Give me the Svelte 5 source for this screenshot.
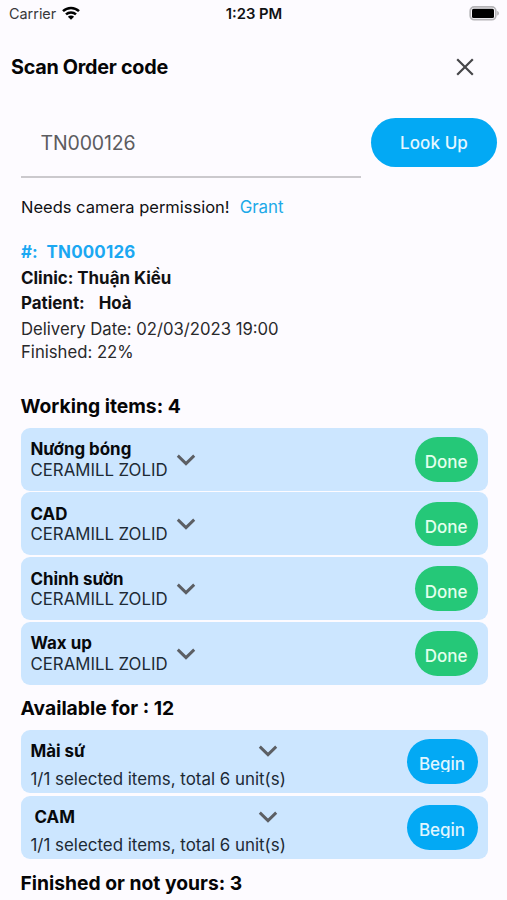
<script lang="ts">
  type WorkingItem = { stage: string; material: string };
  type AvailableItem = { stage: string; summary: string; indented?: boolean };

  let code = $state("TN000126");

  const working: WorkingItem[] = [
    { stage: "Nướng bóng", material: "CERAMILL ZOLID" },
    { stage: "CAD", material: "CERAMILL ZOLID" },
    { stage: "Chỉnh sườn", material: "CERAMILL ZOLID" },
    { stage: "Wax up", material: "CERAMILL ZOLID" },
  ];

  const available: AvailableItem[] = [
    { stage: "Mài sứ", summary: "1/1 selected items, total 6 unit(s)" },
    { stage: "CAM", summary: "1/1 selected items, total 6 unit(s)", indented: true },
  ];
</script>

{#snippet chevron()}
  <svg class="chevron" viewBox="0 0 20 12" fill="none" stroke="currentColor" stroke-width="2.9"><path d="M1.800 1.600 10 9.600l8.200-8"/></svg>
{/snippet}

<div class="screen">
  <div class="status-bar">
    <div class="carrier">
      <span class="carrier-name">Carrier</span>
      <svg class="wifi" viewBox="0 0 18 14" fill="none" stroke="#000" stroke-width="2.500"><path d="M1 5.100a11.600 11.600 0 0 1 16 0"/><path d="M4 8.400a7.300 7.300 0 0 1 10 0"/><path d="M9 13.800 5.900 10.700a4.400 4.400 0 0 1 6.200 0Z" fill="#000" stroke="none"/></svg>
    </div>
    <span class="clock">1:23 PM</span>
    <div class="battery-slot">
      <svg class="battery" viewBox="0 0 31 15"><rect x="1.200" y="0.900" width="25.600" height="12.800" rx="4" fill="#fdfbff" stroke="#b5b4b7" stroke-width="1.700"/><rect x="3" y="2.700" width="22" height="9.200" rx="1.500" fill="#000"/><path d="M28.300 5v4.600c2-.7 2-3.900 0-4.600Z" fill="#a9a8ab"/></svg>
    </div>
  </div>

  <header class="title-bar">
    <h1>Scan Order code</h1>
    <button class="close" aria-label="Close">
      <svg viewBox="0 0 18 18" fill="none" stroke="currentColor" stroke-width="2.200"><path d="m1.200 1.200 15.600 15.600M16.800 1.200 1.200 16.800"/></svg>
    </button>
  </header>

  <div class="lookup">
    <input bind:value={code} aria-label="Order code" />
    <button class="look-up">Look Up</button>
  </div>

  <div class="permission"><span class="notice">Needs camera permission!</span><a href="#grant">Grant</a></div>

  <div class="order">
    <div class="line number"><span>#:</span><span class="value">TN000126</span></div>
    <div class="line clinic">Clinic: Thuận Kiều</div>
    <div class="line patient"><span>Patient:</span><span class="value">Hoà</span></div>
    <div class="meta delivery">Delivery Date: 02/03/2023 19:00</div>
    <div class="meta finished">Finished: 22%</div>
  </div>

  <section class="working">
    <h2>Working items: 4</h2>
    <div class="list">
      {#each working as item}
        <div class="card">
          <div class="info">
            <div class="stage">{item.stage}</div>
            <div class="material">{item.material}</div>
          </div>
          {@render chevron()}
          <button class="pill done"><span>Done</span></button>
        </div>
      {/each}
    </div>
  </section>

  <section class="available">
    <h2>Available for : 12</h2>
    <div class="list">
      {#each available as item}
        <div class="card">
          <div class="info">
            <div class="top">
              <div class="stage" class:indented={item.indented}>{item.stage}</div>
              {@render chevron()}
            </div>
            <div class="summary">{item.summary}</div>
          </div>
          <button class="pill begin"><span>Begin</span></button>
        </div>
      {/each}
    </div>
  </section>

  <section class="finished-items">
    <h2>Finished or not yours: 3</h2>
  </section>
</div>

<style>
  :global(body) {
    background: #fdfbff;
  }

  .screen {
    box-sizing: border-box;
    width: 507px;
    height: 900px;
    overflow: hidden;
    background: #fdfbff;
    color: #111113;
    font-family: Inter, "Noto Sans", sans-serif;
    font-size: 16.5px;
    white-space: nowrap;
  }

  button {
    border: 0;
    padding: 0;
    font: inherit;
  }

  h1,
  h2 {
    margin: 0;
    font-weight: 650;
    color: #050506;
  }

  .status-bar {
    display: grid;
    grid-template-columns: 1fr auto 1fr;
    align-items: center;
    height: 28px;
    padding: 0 7px 0 9px;
  }
  .carrier {
    display: flex;
    align-items: center;
    gap: 6px;
  }
  .carrier-name {
    margin-top: -1px;
    font-size: 14.4px;
    color: #38383a;
  }
  .wifi {
    width: 18px;
    height: 14px;
    margin-top: -2px;
  }
  .clock {
    margin: -1px 1px 0 0;
    font-size: 14.8px;
    font-weight: 600;
  }
  .battery-slot {
    display: flex;
    justify-content: flex-end;
  }
  .battery {
    width: 31px;
    height: 15px;
    margin-top: -2px;
  }

  .title-bar {
    display: flex;
    align-items: center;
    justify-content: space-between;
    height: 78px;
    padding: 0 33px 0 11px;
  }
  h1 {
    font-size: 19.8px;
    letter-spacing: -0.28px;
  }
  .close {
    display: flex;
    background: none;
    color: #464649;
  }
  .close svg {
    width: 18px;
    height: 18px;
  }

  .lookup {
    display: flex;
    align-items: flex-start;
    gap: 10px;
    padding: 3px 10px 0 21px;
    height: 75px;
    box-sizing: border-box;
  }
  input {
    box-sizing: border-box;
    width: 340px;
    height: 69px;
    padding: 0 20px 0 19.5px;
    border: 0;
    border-bottom: 2px solid #cbc9cd;
    outline: 0;
    background: none;
    font: inherit;
    font-size: 19.5px;
    letter-spacing: -0.15px;
    color: #5c5c60;
  }
  .look-up {
    width: 126px;
    height: 49px;
    margin-top: 9px;
    border-radius: 25px;
    background: #03a9f4;
    color: #e5f7ff;
    font-weight: 500;
    font-size: 17px;
    letter-spacing: 0.1px;
  }

  .permission {
    display: flex;
    gap: 10px;
    padding: 15px 0 0 21px;
    line-height: 23px;
  }
  .permission a {
    color: #20a9e8;
    font-size: 16.9px;
    text-decoration: none;
  }

  .order {
    padding: 21px 0 0 21px;
  }
  .line {
    display: flex;
    height: 25.6px;
    line-height: 25.6px;
    font-weight: 650;
    font-size: 16.9px;
  }
  .number {
    gap: 9px;
    color: #1ba8f2;
  }
  .number .value {
    letter-spacing: 0.2px;
  }
  .patient {
    gap: 14px;
  }
  .meta {
    height: 23.5px;
    line-height: 24px;
    font-size: 16.7px;
    color: #29292b;
  }

  section {
    padding: 0 19.500px 0 20.500px;
  }
  h2 {
    font-size: 19.3px;
    line-height: 44px;
  }
  .working {
    margin-top: 20px;
  }
  .list {
    display: flex;
    flex-direction: column;
  }
  .card {
    display: flex;
    align-items: center;
    box-sizing: border-box;
    height: 63px;
    padding: 0 10px;
    border-radius: 9px;
    background: #cce6ff;
  }
  .working .list {
    gap: 1.7px;
  }
  .working .info {
    padding-top: 1px;
  }
  .working .chevron {
    margin: 1px 0 0 8.5px;
  }
  .stage {
    font-size: 16.9px;
    font-weight: 650;
    color: #07090c;
  }
  .working .stage,
  .material {
    line-height: 20.5px;
  }
  .material,
  .summary {
    font-size: 16.8px;
    color: #1d2a35;
  }
  .chevron {
    width: 20px;
    height: 12px;
    color: #5c5f64;
  }

  .pill {
    height: 44.500px;
    margin-left: auto;
    border-radius: 23px;
    font-weight: 500;
    font-size: 17px;
  }
  .pill span {
    display: block;
    margin-top: 4px;
    line-height: 20px;
  }
  .done {
    width: 63px;
    background: #25c878;
    color: #e3ffed;
  }
  .done span {
    margin-top: 6px;
  }
  .begin {
    width: 71px;
    background: #03a9f4;
    color: #e0f6ff;
  }
  /* fixed label height, descenders are cut */
  .begin span {
    height: 18px;
    overflow: hidden;
  }

  .available h2 {
    padding-top: 1px;
    line-height: 44px;
  }
  .available .list {
    gap: 3px;
  }
  .available .info {
    width: 257px;
    padding-top: 9px;
  }
  .top {
    display: flex;
    align-items: center;
    justify-content: space-between;
    padding-right: 10px;
    height: 28px;
  }
  .top .chevron {
    margin-top: -1px;
  }
  .indented {
    padding-left: 4px;
  }
  .summary {
    font-size: 16.9px;
    line-height: 29px;
  }
  .finished-items h2 {
    line-height: 48px;
  }
</style>
